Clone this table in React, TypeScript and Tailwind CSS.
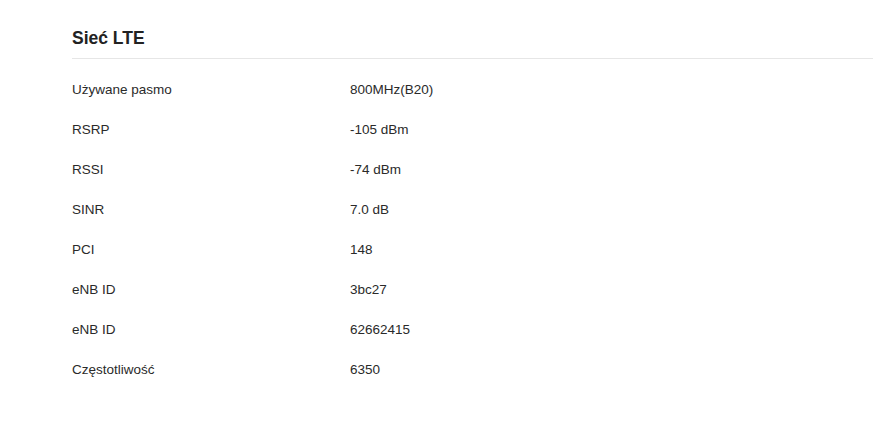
const rows: [string, string][] = [
  ["Używane pasmo", "800MHz(B20)"],
  ["RSRP", "-105 dBm"],
  ["RSSI", "-74 dBm"],
  ["SINR", "7.0 dB"],
  ["PCI", "148"],
  ["eNB ID", "3bc27"],
  ["eNB ID", "62662415"],
  ["Częstotliwość", "6350"],
];

export default function App() {
  return (
    <main className="w-[883px] h-[423px] bg-white font-['Liberation_Sans',Arial,sans-serif] pl-[72px] pr-[10px] pt-[24px]">
      <h2 className="text-[17.5px] font-bold text-[#222] leading-[28px] pb-[6px] border-b border-[#e6e6e6]">
        Sieć LTE
      </h2>
      <section className="flex flex-col pt-[11px]">
        {rows.map(([label, value], i) => (
          <div key={i} className="flex items-center h-[40px] text-[13.5px] text-[#2a2a2a]">
            <span className="w-[278px]">{label}</span>
            <span>{value}</span>
          </div>
        ))}
      </section>
    </main>
  );
}
